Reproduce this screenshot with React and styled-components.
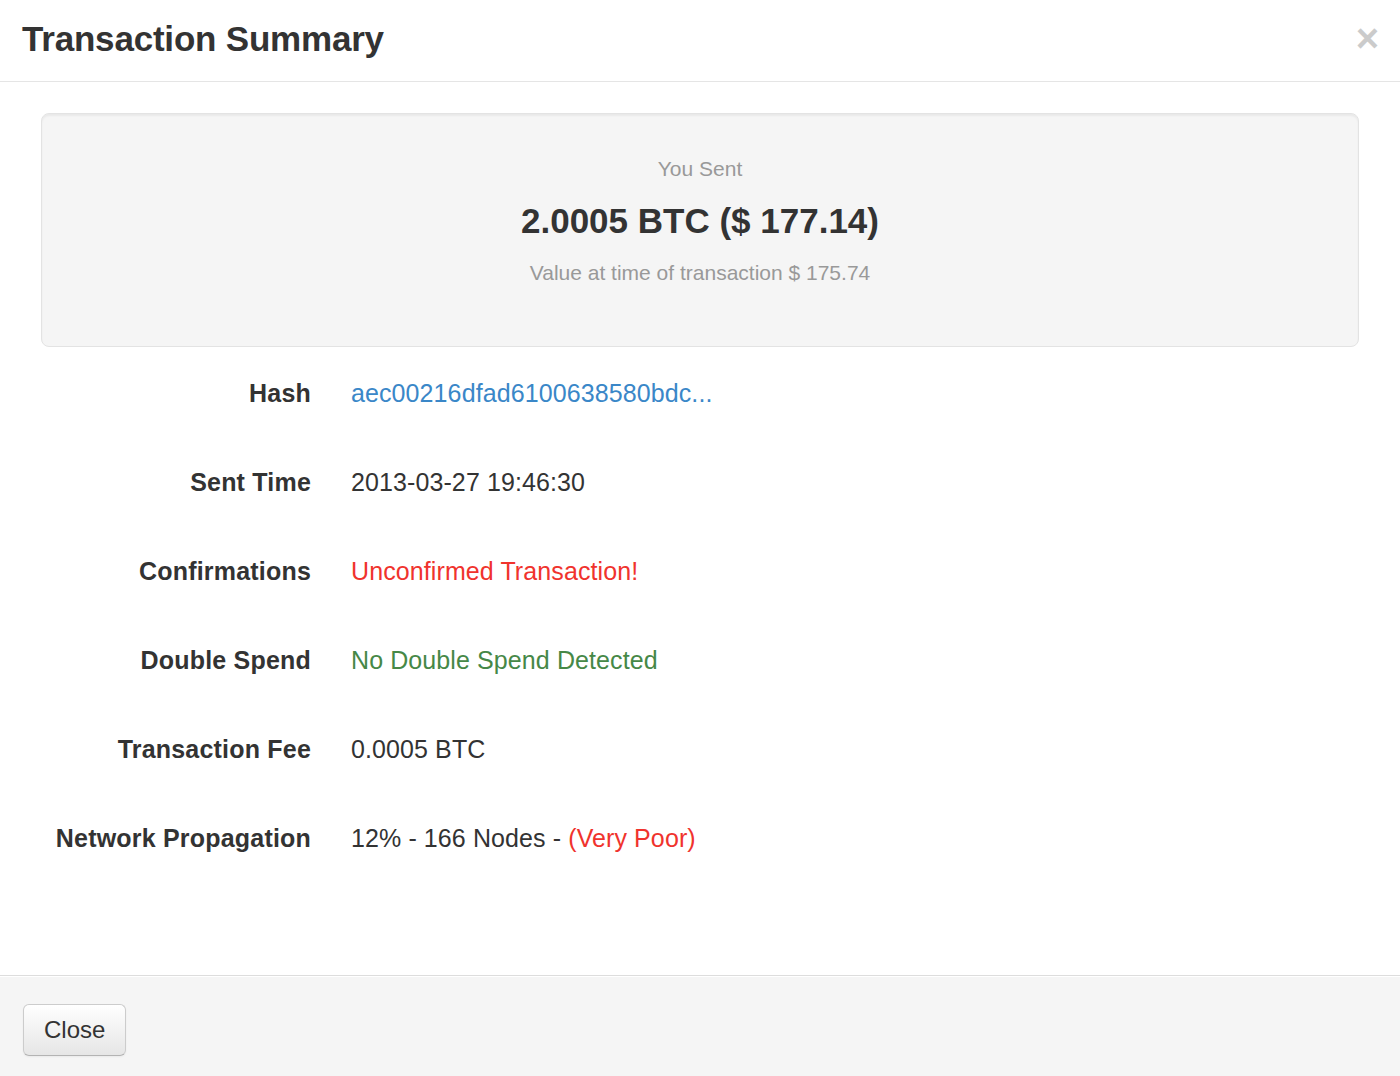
import React from "react";
import styled, { createGlobalStyle } from "styled-components";

const Global = createGlobalStyle`
  html, body { margin: 0; padding: 0; background: #fff; }
  body { font-family: "Liberation Sans", Arial, Helvetica, sans-serif; color: #333; }
`;

const Modal = styled.div`
  width: 1400px;
  height: 1076px;
  display: flex;
  flex-direction: column;
  background: #fff;
`;

const Header = styled.div`
  height: 81px;
  border-bottom: 1px solid #e5e5e5;
  display: flex;
  align-items: center;
  justify-content: space-between;
  padding: 0 22px 0 22px;
  box-sizing: content-box;
`;

const Title = styled.h3`
  margin: 0;
  font-size: 35px;
  font-weight: bold;
  color: #333;
  letter-spacing: -0.2px;
  margin-top: -4px;
`;

const CloseX = styled.span`
  font-size: 40px;
  font-weight: bold;
  color: #000;
  opacity: 0.2;
  line-height: 1;
  margin-top: -6px;
  margin-right: -1px;
`;

const Body = styled.div`
  flex: 1;
  padding: 31px 41px 0 41px;
`;

const Well = styled.div`
  box-sizing: border-box;
  height: 234px;
  background: #f5f5f5;
  border: 1px solid #e3e3e3;
  border-radius: 8px;
  box-shadow: inset 0 2px 2px rgba(0, 0, 0, 0.05);
  display: flex;
  flex-direction: column;
  align-items: center;
  padding-top: 41px;
`;

const Muted = styled.div`
  font-size: 21px;
  color: #999;
  line-height: 28px;
`;

const Amount = styled.div`
  font-size: 35px;
  font-weight: bold;
  color: #333;
  line-height: 40px;
  margin: 18px 0 18px;
`;

const Rows = styled.div`
  display: flex;
  flex-direction: column;
  padding-top: 2px;
`;

const Row = styled.div`
  height: 89px;
  display: grid;
  grid-template-columns: 270px 1fr;
  column-gap: 40px;
  align-items: center;
  font-size: 25px;
  letter-spacing: 0.2px;
`;

const Label = styled.div`
  text-align: right;
  font-weight: bold;
  color: #333;
`;

const Value = styled.div`
  color: ${(p) => p.$color || "#333"};
  letter-spacing: 0.1px;
`;

const Link = styled.a`
  color: #3a87c8;
  text-decoration: none;
`;

const Warn = styled.span`
  color: #f0332d;
`;

const Footer = styled.div`
  height: 100px;
  border-top: 1px solid #ddd;
  background: #f5f5f5;
  display: flex;
  align-items: center;
  padding: 0 23px;
  box-shadow: inset 0 1px 0 #fff;
`;

const Button = styled.button`
  font-family: "Liberation Sans", Arial, sans-serif;
  font-size: 24px;
  color: #333;
  height: 52px;
  padding: 0 20px;
  border: 1px solid #ccc;
  border-bottom-color: #b3b3b3;
  border-radius: 6px;
  background: linear-gradient(#ffffff, #e6e6e6);
  box-shadow: inset 0 1px 0 rgba(255, 255, 255, 0.2), 0 1px 2px rgba(0, 0, 0, 0.05);
  margin-top: 8px;
`;

const rows = [
  { label: "Hash", value: <Link href="#">aec00216dfad6100638580bdc...</Link> },
  { label: "Sent Time", value: "2013-03-27 19:46:30" },
  { label: "Confirmations", value: "Unconfirmed Transaction!", color: "#f0332d" },
  { label: "Double Spend", value: "No Double Spend Detected", color: "#468847" },
  { label: "Transaction Fee", value: "0.0005 BTC" },
  {
    label: "Network Propagation",
    value: (
      <>
        12% - 166 Nodes - <Warn>(Very Poor)</Warn>
      </>
    ),
  },
];

export default function App() {
  return (
    <>
      <Global />
      <Modal>
        <Header>
          <Title>Transaction Summary</Title>
          <CloseX>×</CloseX>
        </Header>
        <Body>
          <Well>
            <Muted>You Sent</Muted>
            <Amount>2.0005 BTC ($ 177.14)</Amount>
            <Muted>Value at time of transaction $ 175.74</Muted>
          </Well>
          <Rows>
            {rows.map((r) => (
              <Row key={r.label}>
                <Label>{r.label}</Label>
                <Value $color={r.color}>{r.value}</Value>
              </Row>
            ))}
          </Rows>
        </Body>
        <Footer>
          <Button>Close</Button>
        </Footer>
      </Modal>
    </>
  );
}
